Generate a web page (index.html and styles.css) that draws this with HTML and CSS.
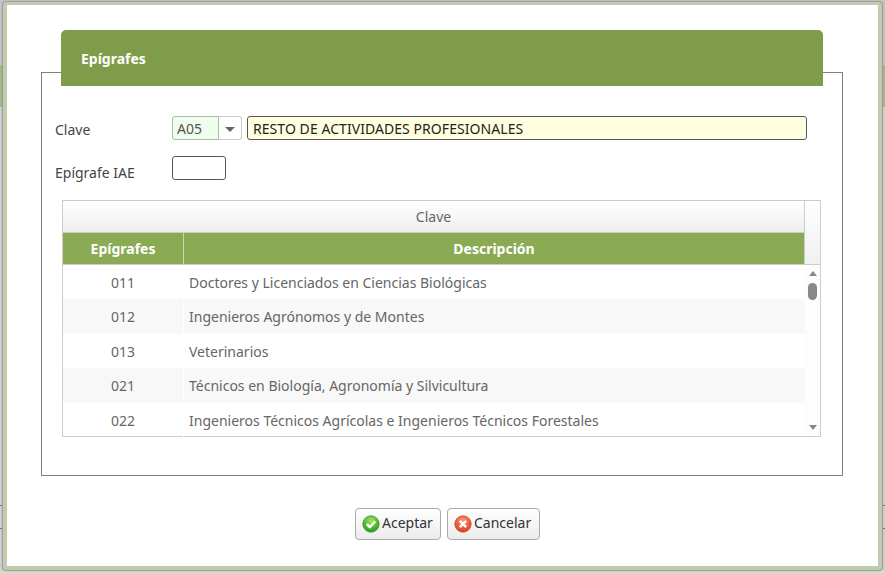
FILE: index.html
```html
<!DOCTYPE html>
<html lang="es">
<head>
    <meta charset="UTF-8">
    <title>Epígrafes</title>
    <link rel="stylesheet" href="styles.css">
</head>
<body>
    <div class="dialog">
        <h2 class="panel-title">Epígrafes</h2>
        <div class="panel">
            <div class="form-row">
                <label class="form-label">Clave</label>
                <div class="combo">
                    <span class="combo-value">A05</span>
                    <span class="combo-button"><span class="combo-arrow"></span></span>
                </div>
                <div class="field-desc">RESTO DE ACTIVIDADES PROFESIONALES</div>
            </div>
            <div class="form-row form-row-iae">
                <label class="form-label">Epígrafe IAE</label>
                <div class="field-iae"></div>
            </div>
            <div class="grid">
                <div class="grid-head">
                    <div class="grid-head-main">
                        <div class="grid-group">Clave</div>
                        <div class="grid-cols">
                            <div class="col-code">Epígrafes</div>
                            <div class="col-desc">Descripción</div>
                        </div>
                    </div>
                    <div class="grid-head-spare"></div>
                </div>
                <div class="grid-body">
                    <div class="grid-rows">
                        <div class="grid-row"><div class="cell-code">011</div><div class="cell-desc">Doctores y Licenciados en Ciencias Biológicas</div></div>
                        <div class="grid-row alt"><div class="cell-code">012</div><div class="cell-desc">Ingenieros Agrónomos y de Montes</div></div>
                        <div class="grid-row"><div class="cell-code">013</div><div class="cell-desc">Veterinarios</div></div>
                        <div class="grid-row alt"><div class="cell-code">021</div><div class="cell-desc">Técnicos en Biología, Agronomía y Silvicultura</div></div>
                        <div class="grid-row"><div class="cell-code">022</div><div class="cell-desc">Ingenieros Técnicos Agrícolas e Ingenieros Técnicos Forestales</div></div>
                    </div>
                    <div class="scrollbar">
                        <span class="scroll-up"></span>
                        <span class="scroll-thumb"></span>
                        <span class="scroll-down"></span>
                    </div>
                </div>
            </div>
        </div>
        <div class="actions">
            <button class="btn btn-ok">
                <svg class="btn-icon" viewBox="0 0 18 18" width="18" height="18">
                    <defs>
                        <radialGradient id="okFill" cx="50%" cy="30%" r="70%">
                            <stop offset="0" stop-color="#a5e65a"/>
                            <stop offset="1" stop-color="#1f9a1f"/>
                        </radialGradient>
                    </defs>
                    <circle cx="9" cy="9" r="8.2" fill="url(#okFill)" stroke="#3d9a35" stroke-width="0.8"/>
                    <path d="M4.8 9.2 L7.8 12 L13.2 6.4" fill="none" stroke="#fff" stroke-width="2.4"/>
                </svg>
                Aceptar
            </button>
            <button class="btn btn-cancel">
                <svg class="btn-icon" viewBox="0 0 18 18" width="18" height="18">
                    <defs>
                        <radialGradient id="koFill" cx="50%" cy="30%" r="70%">
                            <stop offset="0" stop-color="#fb9a70"/>
                            <stop offset="1" stop-color="#dc3a1e"/>
                        </radialGradient>
                    </defs>
                    <circle cx="9" cy="9" r="8.2" fill="url(#koFill)" stroke="#cf4a2c" stroke-width="0.8"/>
                    <path d="M5.8 5.8 L12.2 12.2 M12.2 5.8 L5.8 12.2" fill="none" stroke="#fff" stroke-width="2.4"/>
                </svg>
                Cancelar
            </button>
        </div>
    </div>
</body>
</html>
```

FILE: styles.css
```css
* {
    box-sizing: border-box;
}

html, body {
    height: 100%;
}

body {
    margin: 0;
    padding: 2px 3px 4px 3px;
    overflow: hidden;
    background: linear-gradient(#c4c4c4 0, #c4c4c4 65px, #a6b68a 65px, #a6b68a 107px, #cfcfcf 107px, #cfcfcf 505px, #777 505px, #777 506px, #cfcfcf 506px, #cfcfcf 528px, #777 528px, #777 529px, #cfcfcf 529px, #cfcfcf 570px, #d5dbc8 570px);
    color: #444;
    font-family: "Noto Sans", Arial, sans-serif;
    font-size: 14px;
}

.dialog {
    height: 568px;
    padding: 25px 35px 0 34px;
    background: #fff;
    border: 4px solid #c1ccaf;
    border-top-width: 3px;
    border-radius: 3px;
    box-shadow: 0 0 1px 1px #9a9a9a;
}

.panel-title {
    position: relative;
    z-index: 1;
    height: 56px;
    margin: 0 20px -14px 20px;
    padding: 0 20px;
    background: #7f9c4a;
    border-radius: 5px 5px 0 0;
    color: #fff;
    font-size: 14px;
    font-weight: 700;
    line-height: 57px;
}

.panel {
    height: 404px;
    padding: 43px 21px 0 13px;
    border: 1px solid #808080;
}

.form-row {
    display: flex;
    align-items: center;
    height: 24px;
}

.form-row-iae {
    margin-top: 16px;
}

.form-label {
    width: 117px;
    padding-top: 3px;
}

.form-row-iae .form-label {
    padding-top: 9px;
}

.combo {
    display: flex;
    width: 70px;
    height: 24px;
    margin-right: 5px;
}

.combo-value {
    width: 47px;
    padding-left: 4px;
    background: #f0fced;
    border: 1px solid #a9c0a0;
    border-radius: 3px 0 0 3px;
    color: #555;
    line-height: 24px;
}

.combo-button {
    display: flex;
    align-items: center;
    justify-content: center;
    width: 23px;
    border: 1px solid #ccc;
    border-left: 0;
    border-radius: 0 3px 3px 0;
}

.combo-arrow {
    margin-top: 3px;
    border-top: 5px solid #666;
    border-left: 5px solid transparent;
    border-right: 5px solid transparent;
}

.field-desc {
    width: 560px;
    height: 24px;
    padding-left: 5px;
    background: #ffffe0;
    border: 1px solid #555;
    border-radius: 3px;
    color: #222;
    letter-spacing: 0.06px;
    line-height: 24px;
}

.field-iae {
    width: 54px;
    height: 24px;
    border: 1px solid #555;
    border-radius: 3px;
}

.grid {
    width: 759px;
    height: 237px;
    margin: 20px 0 0 7px;
    border: 1px solid #ccc;
}

.grid-head {
    display: flex;
    height: 64px;
    border-bottom: 1px solid #ccc;
}

.grid-head-main {
    flex: 1;
}

.grid-head-spare {
    width: 16px;
    border-left: 1px solid #ccc;
    background: linear-gradient(#fff, #f0f0f0);
}

.grid-group {
    height: 32px;
    background: linear-gradient(#fff, #eee);
    border-bottom: 1px solid #ccc;
    color: #666;
    line-height: 31px;
    text-align: center;
}

.grid-cols {
    display: flex;
    height: 31px;
    background: #8aab54;
    color: #fff;
    font-weight: 700;
    line-height: 31px;
    text-align: center;
}

.col-code {
    width: 121px;
    border-right: 1px solid #c9d8b0;
}

.col-desc {
    flex: 1;
}

.grid-body {
    display: flex;
    height: 171px;
}

.grid-rows {
    flex: 1;
}

.grid-row {
    display: flex;
    height: 34.4px;
    padding-top: 1px;
    color: #666;
    line-height: 34px;
}

.grid-row.alt {
    background: #f8f8f8;
}

.cell-code {
    width: 121px;
    border-right: 1px solid #fff;
    text-align: center;
}

.cell-desc {
    flex: 1;
    padding-left: 5px;
}

.scrollbar {
    display: flex;
    flex-direction: column;
    align-items: center;
    width: 15px;
    padding-top: 6px;
    background: #fdfdfd;
}

.scroll-up {
    border-bottom: 5px solid #888;
    border-left: 4px solid transparent;
    border-right: 4px solid transparent;
}

.scroll-thumb {
    width: 9px;
    height: 17px;
    margin-top: 7px;
    background: #888;
    border-radius: 5px;
}

.scroll-down {
    margin-top: 125px;
    border-top: 5px solid #888;
    border-left: 4px solid transparent;
    border-right: 4px solid transparent;
}

.actions {
    display: flex;
    justify-content: center;
    gap: 6px;
    margin-top: 32px;
    padding-left: 11px;
}

.btn {
    display: flex;
    align-items: center;
    gap: 2px;
    height: 32px;
    padding: 0 6px 3px 6px;
    background: linear-gradient(#fff, #ececec);
    border: 1px solid #aaa;
    border-radius: 4px;
    color: #333;
    font-family: inherit;
    font-size: 14px;
}

.btn-ok {
    width: 86px;
}

.btn-cancel {
    width: 93px;
}

.btn-icon {
    flex: none;
    margin-top: 3px;
}
```
